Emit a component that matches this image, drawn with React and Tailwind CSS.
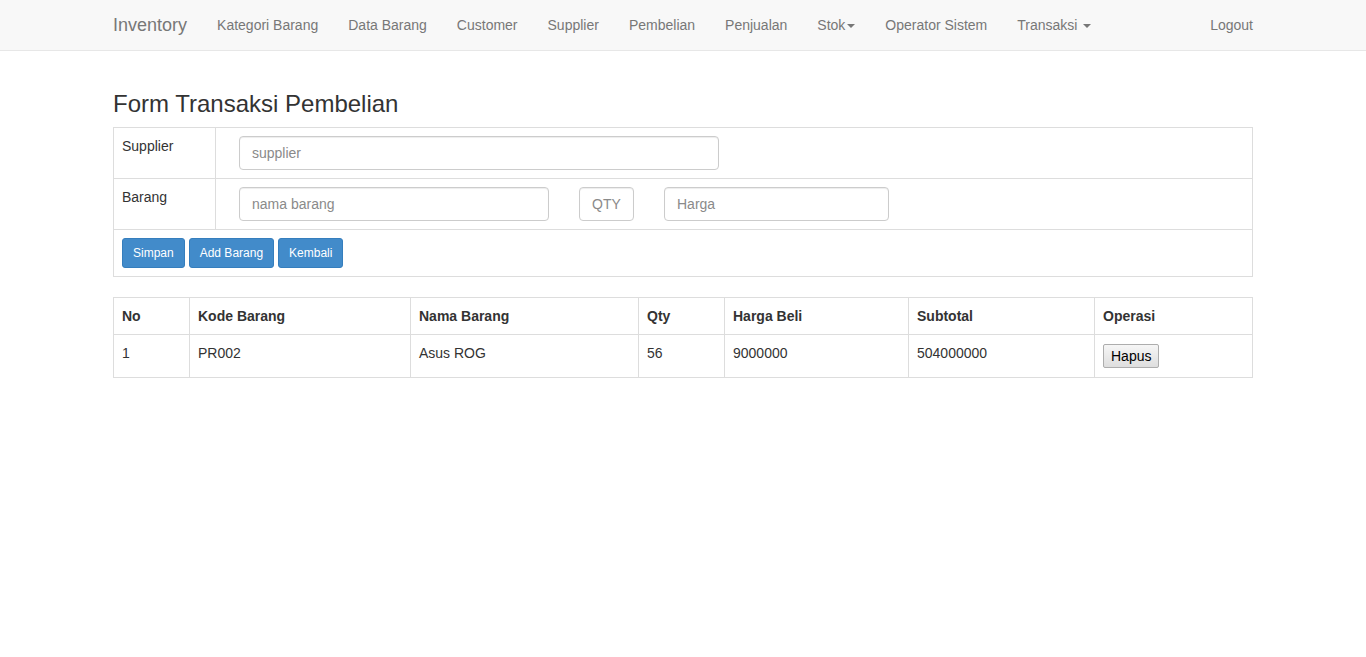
const navLinks = ['Kategori Barang', 'Data Barang', 'Customer', 'Supplier', 'Pembelian', 'Penjualan'];

const Caret = () => (
  <span className="inline-block w-0 h-0 ml-[2px] align-middle border-t-[4px] border-t-[#777] border-x-[4px] border-x-transparent" />
);

function Navbar() {
  return (
    <nav className="h-[51px] bg-[#f8f8f8] border-b border-[#e7e7e7]">
      <div className="w-[1170px] mx-auto px-[15px] flex items-center h-[50px]">
        <span className="text-[18px] leading-[20px] text-[#777] pr-[15px]">Inventory</span>
        {navLinks.map((l) => (
          <span key={l} className="px-[15px] text-[14px] leading-[20px] text-[#777]">{l}</span>
        ))}
        <span className="px-[15px] text-[14px] leading-[20px] text-[#777]">Stok<Caret /></span>
        <span className="px-[15px] text-[14px] leading-[20px] text-[#777]">Operator Sistem</span>
        <span className="px-[15px] text-[14px] leading-[20px] text-[#777]">Transaksi <Caret /></span>
        <span className="ml-auto text-[14px] leading-[20px] text-[#777]">Logout</span>
      </div>
    </nav>
  );
}

const Input = ({ placeholder, width }) => (
  <input
    placeholder={placeholder}
    className={`${width} h-[34px] px-[12px] border border-[#ccc] rounded-[4px] text-[14px] text-[#555] placeholder:text-[#8a8a8a] shadow-[inset_0_1px_1px_rgba(0,0,0,0.075)] outline-none`}
  />
);

const Btn = ({ children }) => (
  <button className="h-[30px] px-[10px] bg-[#428bca] border border-[#357ebd] rounded-[3px] text-white text-[12px] leading-[18px]">
    {children}
  </button>
);

const columns = [
  ['No', 'w-[76px]'],
  ['Kode Barang', 'w-[221px]'],
  ['Nama Barang', 'w-[228px]'],
  ['Qty', 'w-[86px]'],
  ['Harga Beli', 'w-[184px]'],
  ['Subtotal', 'w-[186px]'],
  ['Operasi', ''],
];

const rows = [{ no: 1, kode: 'PR002', nama: 'Asus ROG', qty: 56, harga: 9000000, subtotal: 504000000 }];

export default function App() {
  return (
    <div className="min-h-screen bg-white text-[#333] text-[14px] leading-[20px]" style={{ fontFamily: '"Liberation Sans", Arial, sans-serif' }}>
      <Navbar />
      <div className="w-[1170px] mx-auto px-[15px] pt-[20px]">
        <h3 className="mt-[20px] mb-[10px] text-[24px] leading-[26px] text-[#333]">Form Transaksi Pembelian</h3>

        <table className="w-full border-collapse border border-[#ddd]">
          <tbody>
            <tr>
              <td className="w-[102px] border border-[#ddd] p-[8px] align-top">Supplier</td>
              <td className="border border-[#ddd] p-[8px] pl-[23px]">
                <Input placeholder="supplier" width="w-[480px]" />
              </td>
            </tr>
            <tr>
              <td className="border border-[#ddd] p-[8px] align-top">Barang</td>
              <td className="border border-[#ddd] p-[8px] pl-[23px]">
                <div className="flex gap-[30px]">
                  <Input placeholder="nama barang" width="w-[310px]" />
                  <Input placeholder="QTY" width="w-[55px]" />
                  <Input placeholder="Harga" width="w-[225px]" />
                </div>
              </td>
            </tr>
            <tr>
              <td colSpan={2} className="border border-[#ddd] p-[8px]">
                <div className="flex gap-[4px]">
                  <Btn>Simpan</Btn>
                  <Btn>Add Barang</Btn>
                  <Btn>Kembali</Btn>
                </div>
              </td>
            </tr>
          </tbody>
        </table>

        <table className="w-full mt-[20px] border-collapse border border-[#ddd]">
          <thead>
            <tr>
              {columns.map(([c, w]) => (
                <th key={c} className={`${w} text-left font-bold border border-[#ddd] p-[8px]`}>{c}</th>
              ))}
            </tr>
          </thead>
          <tbody>
            {rows.map((r) => (
              <tr key={r.no}>
                <td className="border border-[#ddd] p-[8px] align-top">{r.no}</td>
                <td className="border border-[#ddd] p-[8px] align-top">{r.kode}</td>
                <td className="border border-[#ddd] p-[8px] align-top">{r.nama}</td>
                <td className="border border-[#ddd] p-[8px] align-top">{r.qty}</td>
                <td className="border border-[#ddd] p-[8px] align-top">{r.harga}</td>
                <td className="border border-[#ddd] p-[8px] align-top">{r.subtotal}</td>
                <td className="border border-[#ddd] px-[8px] pt-[9px] pb-[9px] align-top">
                  <button className="h-[24px] px-[7px] text-[14px] leading-[18px] text-black border border-[#adadad] rounded-[2px] bg-gradient-to-b from-[#f6f6f6] to-[#dedede]">
                    Hapus
                  </button>
                </td>
              </tr>
            ))}
          </tbody>
        </table>
      </div>
    </div>
  );
}
